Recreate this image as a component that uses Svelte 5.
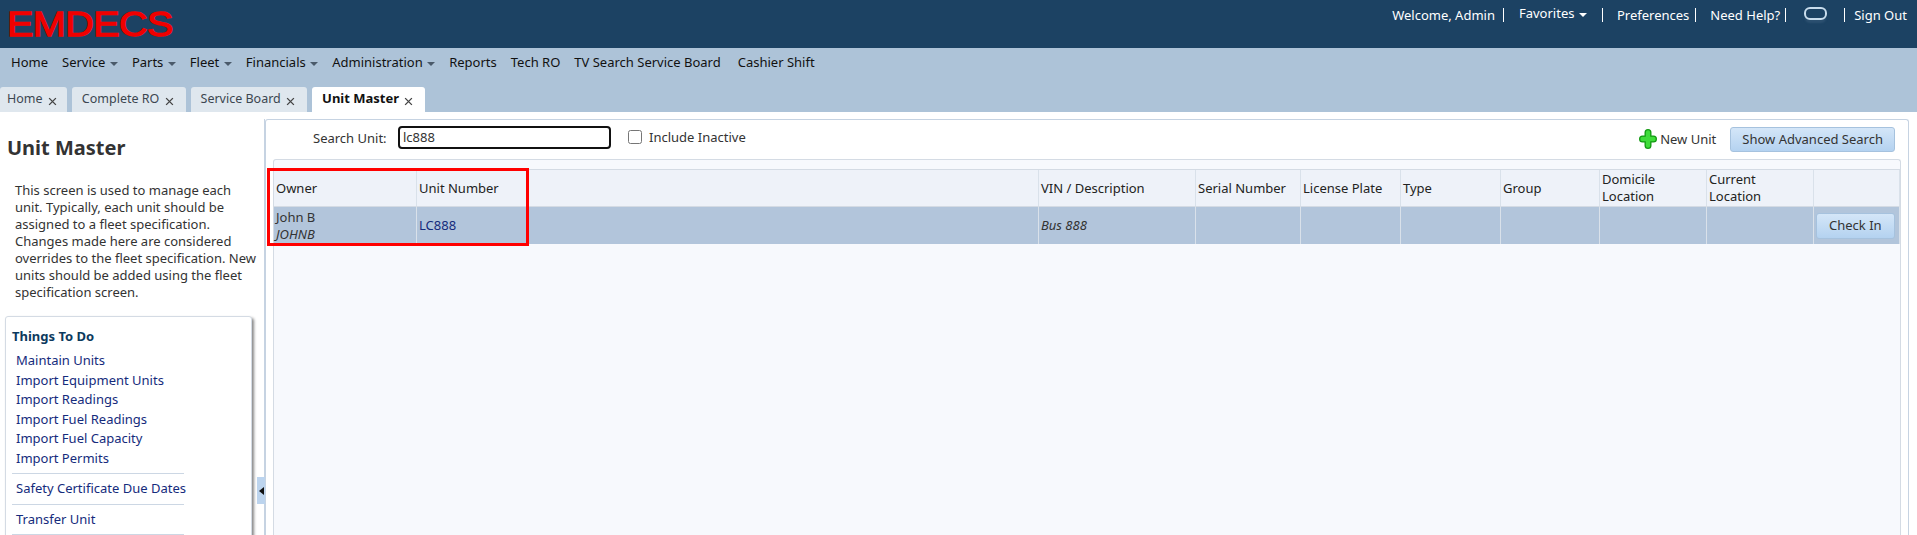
<script>
	const menu = [
		{ label: 'Home' },
		{ label: 'Service', caret: true },
		{ label: 'Parts', caret: true },
		{ label: 'Fleet', caret: true },
		{ label: 'Financials', caret: true },
		{ label: 'Administration', caret: true },
		{ label: 'Reports' },
		{ label: 'Tech RO' },
		{ label: 'TV Search Service Board' },
		{ label: 'Cashier Shift' }
	];
	const tabs = ['Home', 'Complete RO', 'Service Board', 'Unit Master'];
	const links = [
		['Maintain Units', 'Import Equipment Units', 'Import Readings', 'Import Fuel Readings', 'Import Fuel Capacity', 'Import Permits'],
		['Safety Certificate Due Dates'],
		['Transfer Unit']
	];
	const columns = ['Owner', 'Unit Number', 'VIN / Description', 'Serial Number', 'License Plate', 'Type', 'Group', 'Domicile Location', 'Current Location', ''];
</script>

<div class="page">
	<header class="top">
		<div class="logo">EMDECS</div>
		<nav class="user">
			<span>Welcome, Admin</span><i class="bar b1"></i>
			<span class="fav">Favorites<b class="caret light"></b></span><i class="bar b2"></i>
			<span>Preferences</span><i class="bar b3"></i>
			<span>Need Help?</span><i class="bar b4"></i>
			<span class="chat"></span><i class="bar b5"></i>
			<span>Sign Out</span>
		</nav>
	</header>

	<div class="band">
		<nav class="menu">
			{#each menu as item}
				<span class="menu-item">{item.label}{#if item.caret}<b class="caret"></b>{/if}</span>
			{/each}
		</nav>
		<div class="tabs">
			{#each tabs as tab, i}
				<div class="tab" class:active={i === tabs.length - 1}>
					{tab}
					<svg class="close" viewBox="0 0 8 8" width="9" height="9"><path d="M1 1l6 6M7 1l-6 6" /></svg>
				</div>
			{/each}
		</div>
	</div>

	<div class="content">
		<aside class="side">
			<h1>Unit Master</h1>
			<p>This screen is used to manage each unit. Typically, each unit should be assigned to a fleet specification. Changes made here are considered overrides to the fleet specification. New units should be added using the fleet specification screen.</p>
			<div class="todo">
				<h2>Things To Do</h2>
				{#each links as group}
					<ul>
						{#each group as link}
							<li>{link}</li>
						{/each}
					</ul>
				{/each}
			</div>
		</aside>

		<div class="splitter">
			<div class="handle"><b></b></div>
		</div>

		<main class="panel">
			<div class="search">
				<label class="search-label" for="unit">Search Unit:</label>
				<input id="unit" value="lc888" />
				<label class="inactive"><input type="checkbox" /> Include Inactive</label>
				<div class="actions">
					<span class="new-unit">
						<svg viewBox="0 0 18 20" width="18" height="20">
							<path d="M9 3.5v13M3.5 10h11" fill="none" stroke="#129a12" stroke-width="7" stroke-linecap="round" />
							<path d="M9 3.5v13M3.5 10h11" fill="none" stroke="#3fdc3a" stroke-width="4.4" stroke-linecap="round" />
						</svg>
						New Unit
					</span>
					<button class="btn">Show Advanced Search</button>
				</div>
			</div>

			<div class="grid-wrap">
				<div class="grid">
					{#each columns as col, i}
						<div class="th"><span class:wrap={i === 7 || i === 8}>{col}</span></div>
					{/each}
					<div class="td owner">John B<em>JOHNB</em></div>
					<div class="td link">LC888</div>
					<div class="td desc">Bus 888</div>
					<div class="td"></div>
					<div class="td"></div>
					<div class="td"></div>
					<div class="td"></div>
					<div class="td"></div>
					<div class="td"></div>
					<div class="td action"><button class="btn small">Check In</button></div>
				</div>
				<div class="highlight"></div>
			</div>
		</main>
	</div>
</div>

<style>
	:global(body) {
		margin: 0;
		overflow: hidden;
		background: #fff;
	}

	.page {
		height: 535px;
		overflow: hidden;
		font-family: "Noto Sans", "Open Sans", sans-serif;
		font-size: 13px;
		color: #333;
	}

	/* top bar */
	.top {
		height: 48px;
		background: #1c4263;
		display: flex;
		justify-content: space-between;
		align-items: flex-start;
		color: #fff;
	}

	.logo {
		margin: 6px 0 0 7px;
		font-family: "Liberation Sans", sans-serif;
		font-weight: 400;
		font-size: 35px;
		line-height: 36px;
		letter-spacing: -0.5px;
		color: #f00000;
		-webkit-text-stroke: 1.3px #f00000;
		transform: scaleX(1.13);
		transform-origin: left center;
	}

	.user {
		display: flex;
		align-items: center;
		height: 29px;
		padding-right: 10px;
	}

	.fav {
		margin-top: -3px;
	}

	.bar {
		width: 1px;
		height: 14px;
		background: #fff;
	}

	.b1 { margin: 0 15px 0 8px; }
	.b2 { margin: 0 14px 0 15px; }
	.b3 { margin: 0 14px 0 6px; }
	.b4 { margin: 0 18px 0 5px; }
	.b5 { margin: 0 9px 0 17px; }

	.chat {
		width: 23px;
		height: 13px;
		margin-top: -3px;
		border: 2px solid #c8dcec;
		border-radius: 6px;
		box-sizing: border-box;
		box-shadow: 0 4px 2px -1px #2c5070;
	}

	.caret {
		display: inline-block;
		margin-left: 4.5px;
		vertical-align: middle;
		border-left: 4px solid transparent;
		border-right: 4px solid transparent;
		border-top: 4px solid #4a5a6a;
	}

	.caret.light {
		border-top-color: #fff;
	}

	/* menu and tabs */
	.band {
		height: 64px;
		background: #adc3d8;
		display: flex;
		flex-direction: column;
		justify-content: space-between;
	}

	.menu {
		display: flex;
		gap: 14px;
		padding: 5px 0 0 11px;
		color: #111;
		line-height: 18px;
	}

	.menu-item:last-child {
		margin-left: 3px;
	}

	.tabs {
		display: flex;
		gap: 5px;
	}

	.tab {
		height: 25px;
		box-sizing: border-box;
		padding: 3px 12px 0 10px;
		background: #dfe7ee;
		border-radius: 3px 3px 0 0;
		color: #3c4650;
		font-size: 12.5px;
		line-height: 17px;
		white-space: nowrap;
	}

	.tab:first-child {
		padding-left: 7px;
		padding-right: 10px;
	}

	.tab.active {
		background: #fff;
		color: #111;
		font-size: 13px;
		font-weight: 700;
	}

	.close {
		margin-left: 2px;
		vertical-align: -3px;
		fill: none;
		stroke: #444;
		stroke-width: 1.2;
	}

	/* layout */
	.content {
		display: flex;
		height: 423px;
		padding-top: 7px;
		box-sizing: border-box;
	}

	.side {
		width: 257px;
		flex: none;
	}

	.side h1 {
		margin: 15px 0 0 7px;
		font-size: 20px;
		line-height: 27px;
		font-weight: 700;
		color: #333;
	}

	.side p {
		margin: 21px 0 0 15px;
		line-height: 17px;
		color: #333;
	}

	.todo {
		margin: 15px 5px 0 5px;
		padding: 10px 6px 0;
		height: 300px;
		background: #fff;
		border: 1px solid #d4dbe4;
		border-radius: 3px;
		box-shadow: 2px 2px 3px #888;
	}

	.todo h2 {
		margin: 0 0 6px;
		font-size: 13px;
		line-height: 18px;
		font-weight: 700;
		color: #0c3a5e;
	}

	.todo ul {
		margin: 0 0 5px;
		padding: 0 0 5px 4px;
		width: 172px;
		list-style: none;
		border-bottom: 1px solid #ccd7e4;
		box-sizing: border-box;
	}

	.todo li {
		line-height: 19.5px;
		color: #152b7c;
		white-space: nowrap;
	}

	.splitter {
		width: 8px;
		flex: none;
		position: relative;
		border-right: 1px solid #c6d3e2;
		box-sizing: border-box;
	}

	.handle {
		position: absolute;
		top: 358px;
		left: 0;
		width: 8px;
		height: 27px;
		background: #bcd4ee;
		display: flex;
		align-items: center;
		justify-content: center;
	}

	.handle b {
		border-top: 4px solid transparent;
		border-bottom: 4px solid transparent;
		border-right: 5px solid #111;
	}

	.panel {
		flex: 1;
		margin-right: 8px;
		border: 1px solid #c6d3e2;
		border-bottom: none;
		border-radius: 3px 3px 0 0;
		min-width: 0;
	}

	/* search row */
	.search {
		height: 39px;
		display: flex;
		align-items: center;
		box-sizing: border-box;
		padding: 0 13px 3px 47px;
	}

	.search-label {
		width: 85px;
		flex: none;
	}

	#unit {
		width: 213px;
		height: 23px;
		margin-top: -2px;
		box-sizing: border-box;
		padding: 0 3px;
		border: 2px solid #111;
		border-radius: 4px;
		font: inherit;
		color: #333;
		outline: none;
	}

	.inactive {
		display: flex;
		align-items: center;
		gap: 7px;
		margin-left: 17px;
		margin-top: -2px;
	}

	.inactive input {
		margin: 0;
		width: 14px;
		height: 14px;
	}

	.actions {
		margin-left: auto;
		margin-top: 2px;
		display: flex;
		align-items: center;
		gap: 14px;
	}

	.new-unit {
		display: flex;
		align-items: center;
		gap: 3px;
	}

	.btn {
		font: inherit;
		color: #333;
		height: 25px;
		padding: 0 11px;
		background: linear-gradient(#d4e6f8, #b4d2f0);
		border: 1px solid #a6c2de;
		border-radius: 3px;
	}

	/* unit table */
	.grid-wrap {
		position: relative;
		margin: 0 7px 0 7px;
		height: 400px;
		background: #f7f9fd;
		border-top: 1px solid #d4dbe4;
		border-left: 1px solid #d4dbe4;
		border-right: 1px solid #d4dbe4;
		border-radius: 3px 3px 0 0;
		padding-top: 9px;
		box-sizing: border-box;
	}

	.grid {
		display: grid;
		grid-template-columns: 143px 622px 157px 105px 100px 100px 99px 107px 107px 1fr;
		grid-template-rows: 37px 37px;
		border-top: 1px solid #d4dbe4;
	}

	.th, .td {
		display: flex;
		align-items: center;
		padding: 0 2px;
		border-right: 1px solid #d9e1ea;
		box-sizing: border-box;
		line-height: 17px;
	}

	.th {
		background: #eef2f9;
		color: #222;
		border-bottom: 1px solid #d4dbe4;
	}

	.wrap {
		width: min-content;
	}

	.td {
		background: #b2c5db;
	}

	.owner {
		flex-direction: column;
		align-items: flex-start;
		justify-content: center;
	}

	.owner em, .desc {
		font-style: italic;
	}

	.link {
		color: #152b7c;
	}

	.action {
		justify-content: flex-start;
	}

	.btn.small {
		height: 26px;
		padding: 0 12px;
	}

	.highlight {
		position: absolute;
		left: -7px;
		top: 8px;
		width: 262px;
		height: 78px;
		border: 3px solid #f00;
		box-sizing: border-box;
	}
</style>
